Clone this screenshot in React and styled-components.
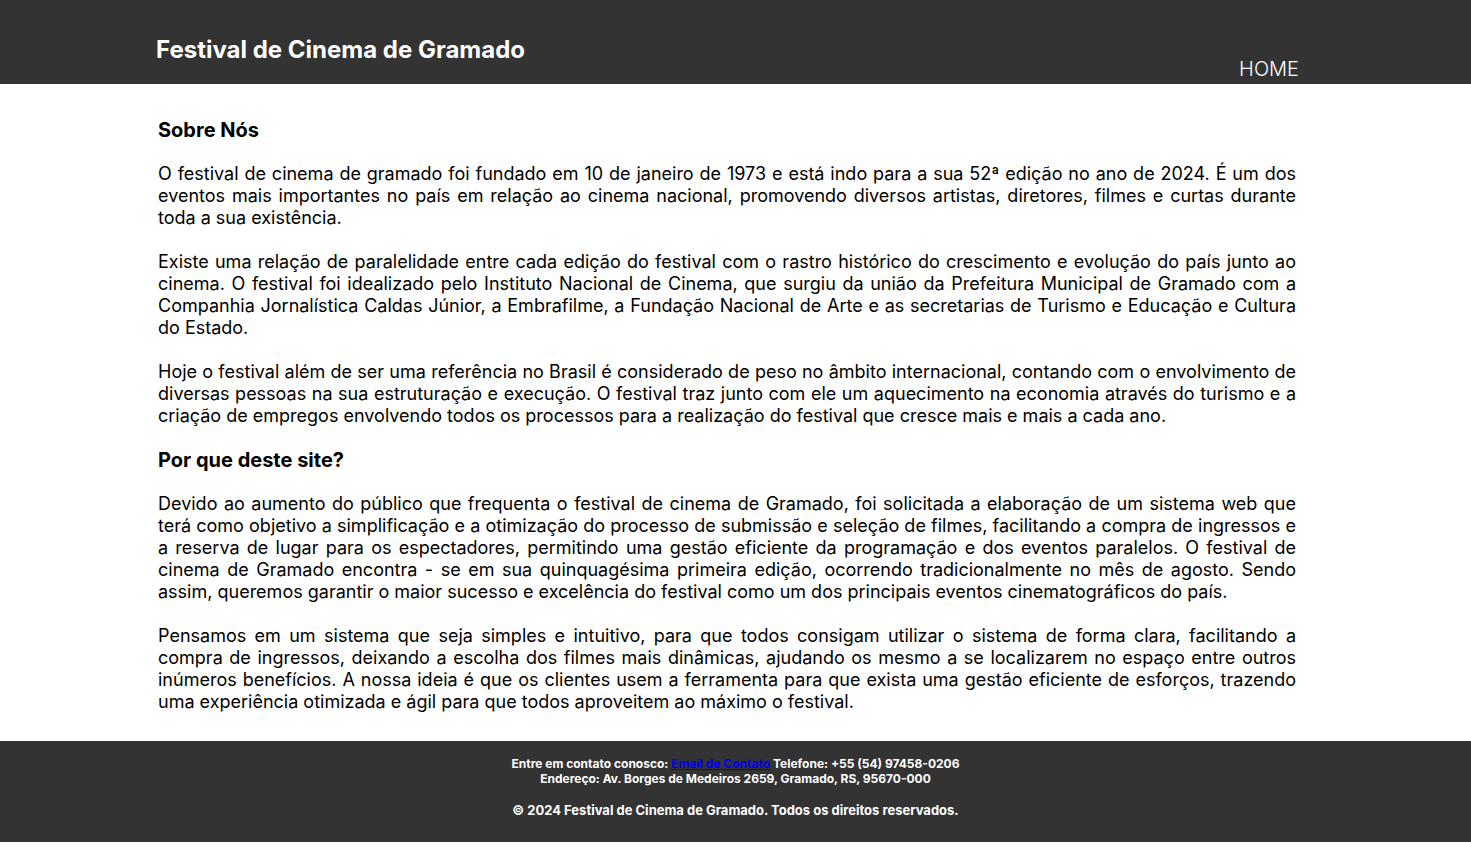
import React from "react";
import styled, { createGlobalStyle } from "styled-components";

const Global = createGlobalStyle`
  html, body { margin: 0; padding: 0; background: #fff; }
  body { font-family: Inter, "Noto Sans", sans-serif; color: #000; padding-bottom: 5px; }
`;

const Header = styled.header`
  background: #333333;
  height: 84px;
  display: flex;
  justify-content: space-between;
  align-items: flex-start;
  padding: 0 172px 0 156px;
  box-sizing: border-box;
`;

const Title = styled.h1`
  margin: 34px 0 0;
  color: #fff;
  font-size: 24px;
  font-weight: 700;
  line-height: 32px;
`;

const Nav = styled.nav`
  margin-top: 56px;
  display: flex;
  gap: 16px;
`;

const NavLink = styled.a`
  color: #fff;
  text-decoration: none;
  font-size: 20px;
  font-weight: 300;
  line-height: 26px;
`;

const Main = styled.main`
  padding: 35px 175px 28px 158px;
`;

const Heading = styled.h2`
  margin: 0 0 22px;
  font-size: 20px;
  font-weight: 700;
  line-height: 22px;
`;

const Para = styled.p`
  margin: 0 0 22px;
  font-size: 18px;
  line-height: 22px;
  text-align: justify;
  &:last-child { margin-bottom: 0; }
`;

const Footer = styled.footer`
  background: #333333;
  color: #fff;
  text-align: center;
  font-size: 12px;
  font-weight: 700;
  line-height: 15px;
  padding: 15px 0 24px;
`;

const FootLine = styled.p`
  margin: 0;
`;

const Copyright = styled.p`
  margin: 16px 0 0;
  font-size: 13px;
  line-height: 16px;
`;

const Link = styled.a`
  color: #0000ee;
  text-decoration: underline;
`;

export default function App() {
  return (
    <>
      <Global />
      <Header>
        <Title>Festival de Cinema de Gramado</Title>
        <Nav>
          <NavLink href="#">HOME</NavLink>
        </Nav>
      </Header>
      <Main>
        <Heading>Sobre Nós</Heading>
        <Para>
          O festival de cinema de gramado foi fundado em 10 de janeiro de 1973 e está indo para a sua 52ª edição no ano de 2024. É um dos eventos mais importantes no país em relação ao cinema nacional, promovendo diversos artistas, diretores, filmes e curtas durante toda a sua existência.
        </Para>
        <Para>
          Existe uma relação de paralelidade entre cada edição do festival com o rastro histórico do crescimento e evolução do país junto ao cinema. O festival foi idealizado pelo Instituto Nacional de Cinema, que surgiu da união da Prefeitura Municipal de Gramado com a Companhia Jornalística Caldas Júnior, a Embrafilme, a Fundação Nacional de Arte e as secretarias de Turismo e Educação e Cultura do Estado.
        </Para>
        <Para>
          Hoje o festival além de ser uma referência no Brasil é considerado de peso no âmbito internacional, contando com o envolvimento de diversas pessoas na sua estruturação e execução. O festival traz junto com ele um aquecimento na economia através do turismo e a criação de empregos envolvendo todos os processos para a realização do festival que cresce mais e mais a cada ano.
        </Para>
        <Heading>Por que deste site?</Heading>
        <Para>
          Devido ao aumento do público que frequenta o festival de cinema de Gramado, foi solicitada a elaboração de um sistema web que terá como objetivo a simplificação e a otimização do processo de submissão e seleção de filmes, facilitando a compra de ingressos e a reserva de lugar para os espectadores, permitindo uma gestão eficiente da programação e dos eventos paralelos. O festival de cinema de Gramado encontra - se em sua quinquagésima primeira edição, ocorrendo tradicionalmente no mês de agosto. Sendo assim, queremos garantir o maior sucesso e excelência do festival como um dos principais eventos cinematográficos do país.
        </Para>
        <Para>
          Pensamos em um sistema que seja simples e intuitivo, para que todos consigam utilizar o sistema de forma clara, facilitando a compra de ingressos, deixando a escolha dos filmes mais dinâmicas, ajudando os mesmo a se localizarem no espaço entre outros inúmeros benefícios. A nossa ideia é que os clientes usem a ferramenta para que exista uma gestão eficiente de esforços, trazendo uma experiência otimizada e ágil para que todos aproveitem ao máximo o festival.
        </Para>
      </Main>
      <Footer>
        <FootLine>
          Entre em contato conosco: <Link href="#">Email de Contato</Link> Telefone: +55 (54) 97458-0206
        </FootLine>
        <FootLine>Endereço: Av. Borges de Medeiros 2659, Gramado, RS, 95670-000</FootLine>
        <Copyright>© 2024 Festival de Cinema de Gramado. Todos os direitos reservados.</Copyright>
      </Footer>
    </>
  );
}
